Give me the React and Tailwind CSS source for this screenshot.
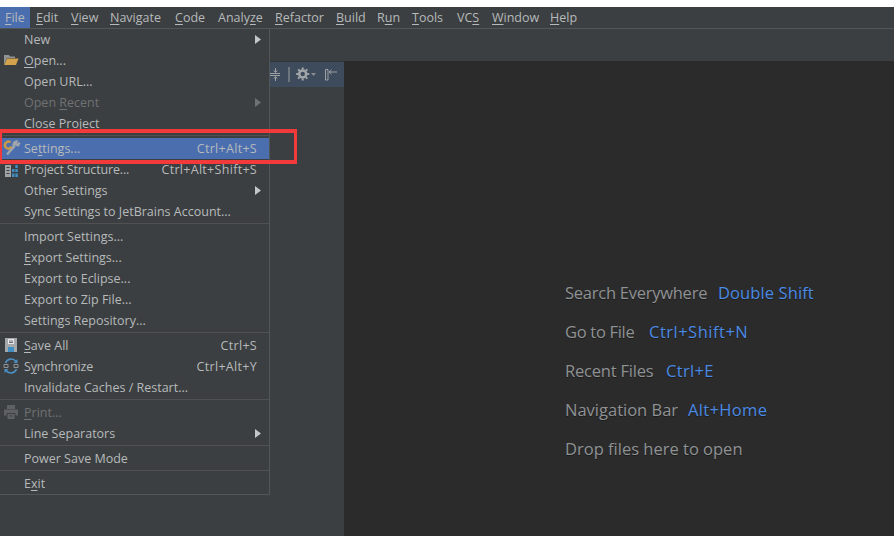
const font = { fontFamily: '"Open Sans","Noto Sans",sans-serif' };

const U = ({ children }) => <span className="underline underline-offset-2 decoration-1">{children}</span>;

const Arrow = ({ dim }) => (
  <svg className="absolute left-[254px] top-[5px]" width="8" height="11" viewBox="0 0 8 11">
    <path d="M1 1 L7 5.5 L1 10 Z" fill={dim ? "#6f7273" : "#c4c7c9"} />
  </svg>
);

const Row = ({ label, shortcut, arrow, icon, dim, active }) => (
  <div className={`relative h-[21px] ${active ? "bg-[#4b6eaf]" : ""}`}>
    {icon && <div className="absolute left-[3px] top-[2px] w-4 h-4">{icon}</div>}
    <span className={`absolute left-[24px] top-0 leading-[21px] whitespace-nowrap ${dim ? "text-[#6f7273]" : "text-[#b6babb]"}`}>{label}</span>
    {shortcut && <span className="absolute right-[12px] top-0 leading-[21px] whitespace-nowrap text-[#b6babb] tracking-[0.3px]">{shortcut}</span>}
    {arrow && <Arrow dim={dim} />}
  </div>
);

const Sep = () => <div className="h-[4px] pt-px"><div className="h-px w-full bg-[#515151]" /></div>;

const Folder = (
  <svg width="16" height="16" viewBox="0 0 16 16">
    <path d="M1 3h5l1 1.500h5V6H4L1 13Z" fill="#8f9396" />
    <path d="M4 6.500h11.500L13 13H1.200Z" fill="#d2a24c" />
  </svg>
);
const Wrench = (
  <svg width="18" height="18" viewBox="0 0 18 18" fill="none" className="overflow-visible">
    <path d="M7.500 2.200A3.500 3.500 0 1 0 8 7.500" stroke="#c99a45" strokeWidth="2.400" />
    <path d="M7 6.500 10 9" stroke="#c99a45" strokeWidth="2" />
    <path d="M16.500 2.500 15 5.300 13 4.500 13.500 1.500A3.300 3.300 0 0 0 11 6.500L4 14.500" stroke="#a0a5a9" strokeWidth="2.400" />
  </svg>
);
const Structure = (
  <svg width="16" height="16" viewBox="0 0 16 16" className="overflow-visible">
    <path d="M2 4h6v12H2Z" fill="#a0a4a7" />
    <path d="M3.500 6h3v1h-3ZM3.500 9h3v1h-3ZM3.500 12h3v1h-3Z" fill="#3c3f41" />
    <path d="M9 8h2.500v3H9ZM12.300 8h2.500v3h-2.500ZM9 12.500h2.500V16H9ZM12.300 12.500h2.500V16h-2.500ZM12.300 4h2.500v3h-2.500Z" fill="#3f8fc4" />
  </svg>
);
const Save = (
  <svg width="16" height="16" viewBox="0 0 16 16">
    <path d="M2 1h12v14H2Z" fill="#a4a8ab" />
    <path d="M5 2h6v5H5Z" fill="#e8e8e8" />
    <path d="M6 3.500h4v1H6ZM6 5h4v1H6Z" fill="#6b6f72" />
    <path d="M5 10h6v5H5Z" fill="#3f8fc4" />
  </svg>
);
const Sync = (
  <svg width="16" height="16" viewBox="0 0 16 16" fill="none">
    <path d="M2.500 5a6 6 0 0 1 10.500-1.500M13.500 11a6 6 0 0 1-10.500 1.500" stroke="#4a90c4" strokeWidth="1.600" />
    <path d="M14.500 1v4h-4ZM1.500 15v-4h4Z" fill="#4a90c4" />
    <path d="M1 6.500h4v3H1ZM11 6.500h4v3h-4Z" stroke="#8f9396" />
  </svg>
);
const Printer = (
  <svg width="16" height="16" viewBox="0 0 16 16">
    <path d="M4 1h8v4H4ZM1 5.500h14v6h-2.500V9h-9v2.500H1ZM4.500 10h7v5h-7Z" fill="#5e6163" />
    <path d="M6.500 11.500h3v1h-3Z" fill="#3c3f41" />
  </svg>
);

const menus = [
  [<><U>F</U>ile</>, 5], [<><U>E</U>dit</>, 36], [<><U>V</U>iew</>, 71], [<><U>N</U>avigate</>, 110],
  [<><U>C</U>ode</>, 175], [<>Analy<U>z</U>e</>, 218], [<><U>R</U>efactor</>, 275], [<><U>B</U>uild</>, 336],
  [<>R<U>u</U>n</>, 377], [<><U>T</U>ools</>, 412], [<>VC<U>S</U></>, 457], [<><U>W</U>indow</>, 492], [<><U>H</U>elp</>, 550],
];

const Hint = ({ top, a, aClass = "", b, bClass = "", bLeft }) => (
  <div className="absolute left-0 w-full text-[16.500px] leading-[24px] [text-shadow:0_1px_0_#1c1c1c]" style={{ top }}>
    <span className={`absolute left-[565px] whitespace-nowrap text-[#8f9294] ${aClass}`}>{a}</span>
    {b && <span className={`absolute whitespace-nowrap text-[#4a8ae4] ${bClass}`} style={{ left: bLeft }}>{b}</span>}
  </div>
);

export default function App() {
  return (
    <div className="relative w-[894px] h-[536px] overflow-hidden bg-white text-[12.500px]" style={font}>
      <div className="absolute left-0 right-0 top-[7px] bottom-0 bg-[#3c3f41]" />
      {/* menu bar */}
      <div className="absolute left-0 top-[7px] w-[30px] h-[21px] bg-[#4b6eaf]" />
      <div className="absolute left-0 right-0 top-[28px] h-px bg-[#515658]" />
      {menus.map(([m, x], i) => (
        <span key={i} className="absolute top-[7px] leading-[21px] text-[#b6babb] whitespace-nowrap" style={{ left: x }}>{m}</span>
      ))}
      {/* tool window header */}
      <div className="absolute left-[269px] top-[61px] w-[75px] h-[26px] bg-[#3d4b5c] border-t border-[#323538]" />
      <div className="absolute left-[344px] top-[61px] right-0 bottom-0 bg-[#2b2b2b]" />
      <svg className="absolute left-[270px] top-[66px]" width="72" height="16" viewBox="0 0 72 16" fill="none">
        <path d="M0 7.500h10M0 9.500h10" stroke="#9da1a4" />
        <path d="M5.500 2v4M3.800 4.500 5.500 6.500 7.200 4.500M5.500 15v-4M3.800 12.500 5.500 10.500 7.200 12.500" stroke="#9da1a4" />
        <path d="M19 1v15" stroke="#7e8487" strokeWidth="1.500" />
        <circle cx="32.700" cy="8" r="3.500" stroke="#a3a7a9" strokeWidth="2.500" />
        <path d="M32.700 1.500v2M32.700 12.500v2M26.200 8h2M37.200 8h2M28.100 3.400l1.400 1.400M35.900 11.200l1.400 1.400M28.100 12.600l1.400-1.400M35.900 4.800l1.400-1.400" stroke="#a3a7a9" strokeWidth="2" />
        <path d="M41 7h5l-2.500 3Z" fill="#8a8e91" />
        <path d="M55.500 3.500h2.500v10.500h-2.500Z" stroke="#9da1a4" />
        <path d="M59 6h8M59 6l2.500-2.200M59 6l2.500 2.200" stroke="#9da1a4" />
      </svg>
      {/* file menu */}
      <div className="absolute left-0 top-[28px] w-[270px] h-[467px] bg-[#3c3f41] border-r border-b border-t border-[#515658] box-border">
        <Row label="New" arrow />
        <Row label={<><U>O</U>pen...</>} icon={Folder} />
        <Row label="Open URL..." />
        <Row label={<>Open <U>R</U>ecent</>} arrow dim />
        <Row label={<>Close Pro<U>j</U>ect</>} />
        <Sep />
        <Row label={<>Se<U>t</U>tings...</>} shortcut="Ctrl+Alt+S" icon={Wrench} active />
        <Row label={<span className="tracking-[-0.15px]">Project Structure...</span>} shortcut="Ctrl+Alt+Shift+S" icon={Structure} />
        <Row label="Other Settings" arrow />
        <Row label="Sync Settings to JetBrains Account..." />
        <Sep />
        <Row label="Import Settings..." />
        <Row label={<><U>E</U>xport Settings...</>} />
        <Row label="Export to Eclipse..." />
        <Row label="Export to Zip File..." />
        <Row label="Settings Repository..." />
        <Sep />
        <Row label={<><U>S</U>ave All</>} shortcut="Ctrl+S" icon={Save} />
        <Row label={<span className="tracking-[-0.15px]">S<U>y</U>nchronize</span>} shortcut="Ctrl+Alt+Y" icon={Sync} />
        <Row label="Invalidate Caches / Restart..." />
        <Sep />
        <Row label={<><U>P</U>rint...</>} icon={Printer} dim />
        <Row label="Line Separators" arrow />
        <Sep />
        <Row label="Power Save Mode" />
        <Sep />
        <Row label={<>E<U>x</U>it</>} />
      </div>
      {/* red highlight */}
      <div className="absolute left-0 top-[129px] w-[297px] h-[35px] border-y-4 border-l-2 border-r-[3px] border-[#f23a3a] box-border" />
      {/* hints */}
      <Hint top={281} a="Search Everywhere" aClass="tracking-[-0.25px]" b="Double Shift" bClass="tracking-[0.1px]" bLeft={718} />
      <Hint top={320} a="Go to File" aClass="tracking-[-0.3px]" b="Ctrl+Shift+N" bClass="tracking-[0.5px]" bLeft={649} />
      <Hint top={359} a="Recent Files" aClass="tracking-[-0.2px]" b="Ctrl+E" bClass="tracking-[0.35px]" bLeft={666} />
      <Hint top={398} a="Navigation Bar" b="Alt+Home" bClass="tracking-[0.35px]" bLeft={688} />
      <Hint top={437} a="Drop files here to open" />
    </div>
  );
}
